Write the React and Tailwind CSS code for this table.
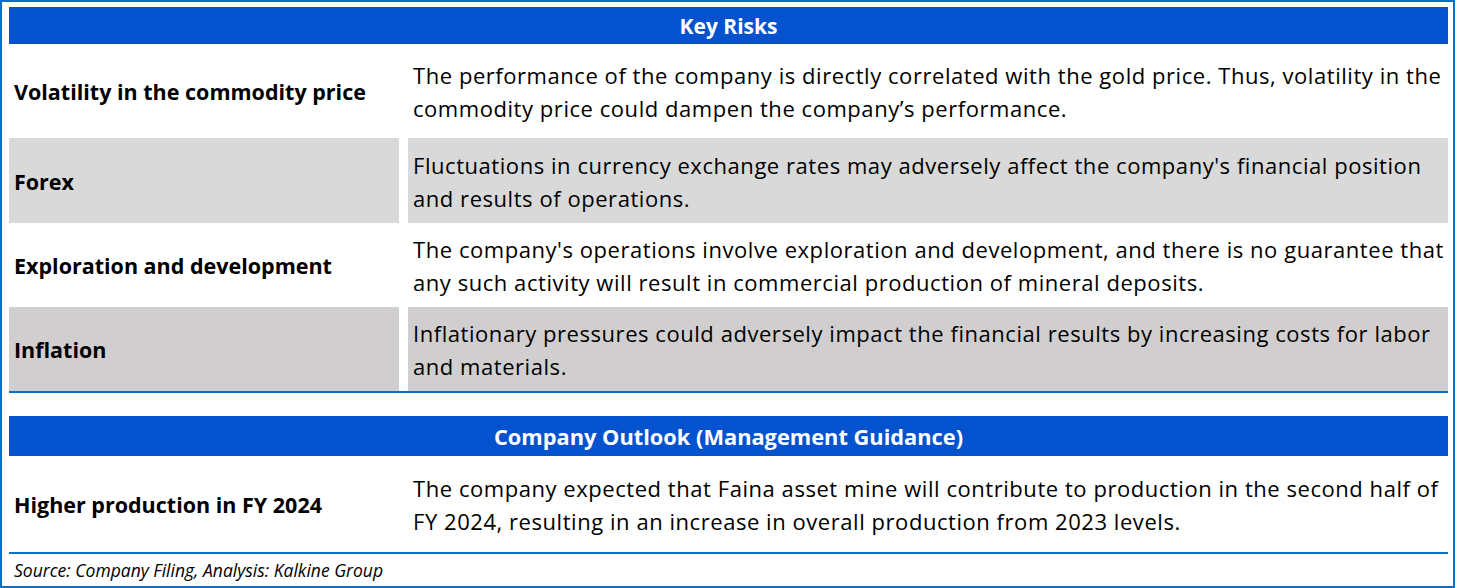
import React from "react";

const rows = [
  {
    label: "Volatility in the commodity price",
    lines: [
      "The performance of the company is directly correlated with the gold price. Thus, volatility in the",
      "commodity price could dampen the company’s performance.",
    ],
    gray: "",
    h: "h-[94px]",
  },
  {
    label: "Forex",
    lines: [
      "Fluctuations in currency exchange rates may adversely affect the company's financial position",
      "and results of operations.",
    ],
    gray: "bg-[#d9d9d9]",
    h: "h-[85px]",
  },
  {
    label: "Exploration and development",
    lines: [
      "The company's operations involve exploration and development, and there is no guarantee that",
      "any such activity will result in commercial production of mineral deposits.",
    ],
    gray: "",
    h: "h-[84px]",
  },
  {
    label: "Inflation",
    lines: [
      "Inflationary pressures could adversely impact the financial results by increasing costs for labor",
      "and materials.",
    ],
    gray: "bg-[#d0cece]",
    h: "h-[84px]",
  },
];

function Row({ label, lines, gray, h }) {
  return (
    <div className={`flex gap-[9px] ${h}`}>
      <div className={`w-[390px] flex items-center pl-[5px] pt-[3px] font-bold text-[21.5px] ${gray}`}>{label}</div>
      <div className={`flex-1 flex flex-col justify-center pl-[5px] pt-[2px] text-[22px] tracking-[0.55px] ${gray}`}>
        {lines.map((l, i) => (
          <div key={i} className="whitespace-nowrap leading-[33px]">{l}</div>
        ))}
      </div>
    </div>
  );
}

export default function App() {
  return (
    <div className="w-[1455px] h-[588px] bg-white border-2 border-[#0b6fc6] pl-[7px] pr-[5px] pt-[5px] text-black" style={{ fontFamily: "'Open Sans', sans-serif" }}>
      <div className="h-[37px] pt-[3px] bg-[#0552cf] text-white font-bold text-[21px] flex items-center justify-center">Key Risks</div>
      {rows.map((r, i) => (
        <Row key={i} {...r} />
      ))}
      <div className="h-[2px] bg-[#0b6fc6]" />
      <div className="h-[23px]" />
      <div className="h-[40px] pt-[2px] bg-[#0552cf] text-white font-bold text-[21.8px] flex items-center justify-center">Company Outlook (Management Guidance)</div>
      <Row
        label="Higher production in FY 2024"
        lines={[
          "The company expected that Faina asset mine will contribute to production in the second half of",
          "FY 2024, resulting in an increase in overall production from 2023 levels.",
        ]}
        gray=""
        h="h-[96px]"
      />
      <div className="h-[2px] bg-[#0b6fc6]" />
      <div className="pl-[5px] pt-[3px] italic text-[17.5px] leading-[26px]">Source: Company Filing, Analysis: Kalkine Group</div>
    </div>
  );
}
